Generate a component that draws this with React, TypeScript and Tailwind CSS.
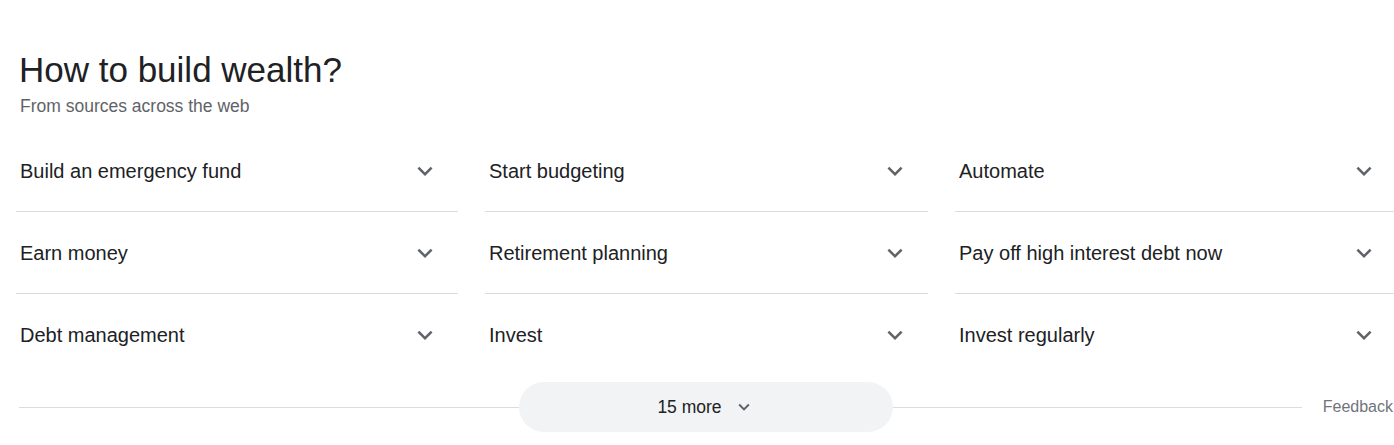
import React from "react";

const Chevron = ({ size, className }: { size: number; className?: string }) => (
  <svg
    width={size}
    height={size}
    viewBox="0 0 24 24"
    className={className}
    fill="currentColor"
    aria-hidden="true"
  >
    <path d="M16.59 8.59L12 13.17 7.41 8.59 6 10l6 6 6-6z" />
  </svg>
);

const items = [
  ["Build an emergency fund", "Start budgeting", "Automate"],
  ["Earn money", "Retirement planning", "Pay off high interest debt now"],
  ["Debt management", "Invest", "Invest regularly"],
];

export default function App() {
  return (
    <div
      className="w-[1394px] h-[445px] overflow-hidden bg-white text-[#202124]"
      style={{ fontFamily: '"Liberation Sans", Arial, sans-serif' }}
    >
      <div className="pt-[48px] pl-[19px]">
        <h1 className="text-[35px] leading-[44px] font-normal text-[#202124]">
          How to build wealth?
        </h1>
        <div className="mt-[2px] pl-[1px] text-[17.5px] leading-[24px] text-[#5f6368]">
          From sources across the web
        </div>
      </div>

      <div className="mt-[12px] pl-[16px] grid grid-cols-[442px_443px_442px] gap-x-[27px]">
        {items.map((row, ri) =>
          row.map((label, ci) => (
            <div
              key={`${ri}-${ci}`}
              className={`flex items-center justify-between h-[82px] pl-[4px] pr-[18px] ${
                ri < 2 ? "border-b border-[#dadce0]" : ""
              }`}
            >
              <span className="text-[20px] leading-[28px]">{label}</span>
              <Chevron size={30} className="text-[#5f6368]" />
            </div>
          ))
        )}
      </div>

      <div className="mt-[6px] flex items-center h-[50px]">
        <div className="ml-[19px] w-[500px] h-px bg-[#dadce0]" />
        <button className="w-[374px] h-[50px] rounded-full bg-[#f1f3f4] flex items-center justify-center gap-[11px] text-[17.5px] text-[#202124]">
          <span>15 more</span>
          <Chevron size={22} className="text-[#5f6368]" />
        </button>
        <div className="flex-1 h-px bg-[#dadce0]" />
        <span className="ml-[21px] mr-[1px] text-[16px] text-[#70757a]">Feedback</span>
      </div>
    </div>
  );
}
